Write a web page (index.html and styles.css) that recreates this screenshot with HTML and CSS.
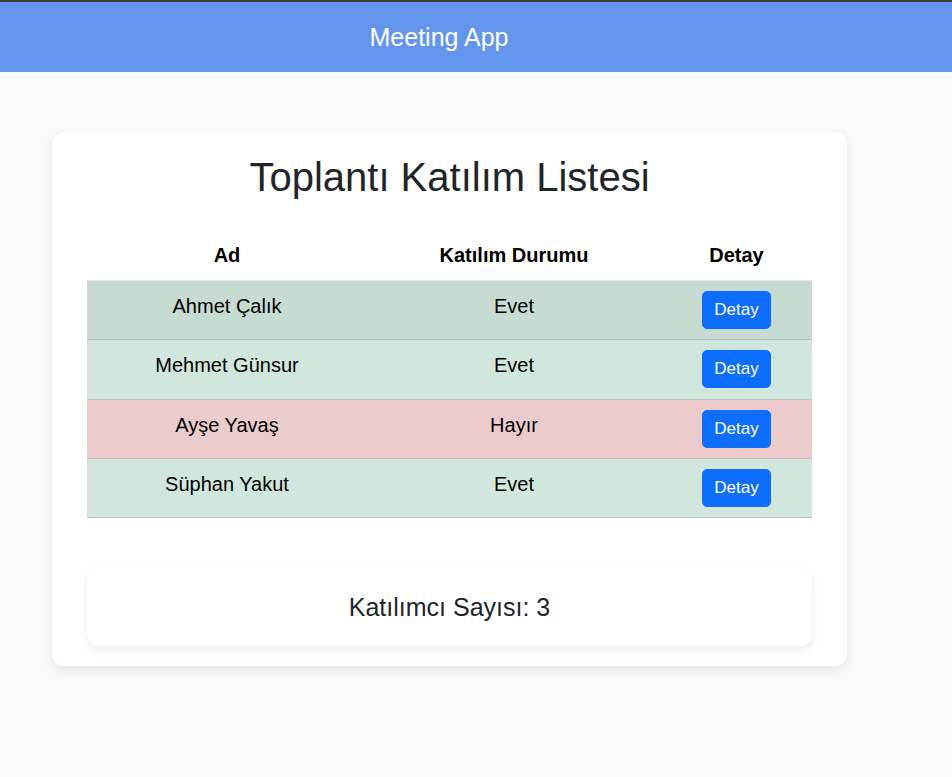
FILE: index.html
```html
<!DOCTYPE html>
<html lang="tr">
<head>
<meta charset="utf-8">
<title>Meeting App</title>
<link rel="stylesheet" href="styles.css">
</head>
<body>
<header class="navbar">
  <span class="brand">Meeting App</span>
</header>
<main class="page">
  <section class="card">
    <h1 class="title">Toplantı Katılım Listesi</h1>
    <table class="attendance">
      <colgroup>
        <col class="col-name">
        <col class="col-status">
        <col class="col-detail">
      </colgroup>
      <thead>
        <tr><th>Ad</th><th>Katılım Durumu</th><th>Detay</th></tr>
      </thead>
      <tbody>
        <tr class="row-yes striped"><td>Ahmet Çalık</td><td>Evet</td><td><button class="btn">Detay</button></td></tr>
        <tr class="row-yes"><td>Mehmet Günsur</td><td>Evet</td><td><button class="btn">Detay</button></td></tr>
        <tr class="row-no striped"><td>Ayşe Yavaş</td><td>Hayır</td><td><button class="btn">Detay</button></td></tr>
        <tr class="row-yes"><td>Süphan Yakut</td><td>Evet</td><td><button class="btn">Detay</button></td></tr>
      </tbody>
    </table>
    <div class="summary">Katılımcı Sayısı: 3</div>
  </section>
</main>
</body>
</html>
```
FILE: styles.css
```css
* { box-sizing: border-box; }
html, body { margin: 0; padding: 0; }
body {
  background: #f8f9fa;
  font-family: "Liberation Sans", Arial, sans-serif;
  color: #212529;
  min-height: 777px;
}
.navbar {
  border-top: 2px solid #3d3d3f;
  height: 72px;
  background: #6495ed;
  display: flex;
  align-items: center;
  justify-content: center;
  padding-right: 74px;
}
.brand {
  color: #fff;
  font-size: 25px;
  line-height: 30px;
}
.page {
  padding: 60px 0 0 52px;
}
.card {
  width: 795px;
  background: #fff;
  border-radius: 12px;
  box-shadow: 0 4px 12px rgba(0, 0, 0, 0.08);
  padding: 21px 35px 20px;
}
.title {
  margin: 0;
  font-size: 40px;
  font-weight: 400;
  line-height: 48px;
  text-align: center;
  color: #212529;
}
.attendance {
  width: 725px;
  margin-top: 29px;
  border-collapse: collapse;
  font-size: 20px;
  line-height: 30px;
  text-align: center;
  color: #000;
}
.col-name { width: 280px; }
.col-status { width: 294px; }
.col-detail { width: 151px; }
.attendance th {
  font-weight: 700;
  padding: 10px 8px 10px;
  border-bottom: 1px solid #dee2e6;
}
.attendance td {
  padding: 10px 8px 10.35px;
  vertical-align: top;
}
.row-yes { background: #d1e7dd; }
.row-yes.striped { background: #c7dbd2; }
.row-yes td { border-bottom: 1px solid #b5c5be; }
.row-no.striped { background: #eccbcd; }
.row-no td { border-bottom: 1px solid #d6b8ba; }
.btn {
  font-family: "Liberation Sans", Arial, sans-serif;
  font-size: 17px;
  line-height: 24px;
  color: #fff;
  background: #0d6efd;
  border: 1px solid #0d6efd;
  border-radius: 5px;
  padding: 6px 11px;
  cursor: pointer;
}
.summary {
  margin-top: 50px;
  background: #fff;
  border-radius: 12px;
  box-shadow: 0 4px 10px rgba(0, 0, 0, 0.08);
  height: 78px;
  display: flex;
  align-items: center;
  justify-content: center;
  font-size: 25px;
  color: #212529;
}
```
